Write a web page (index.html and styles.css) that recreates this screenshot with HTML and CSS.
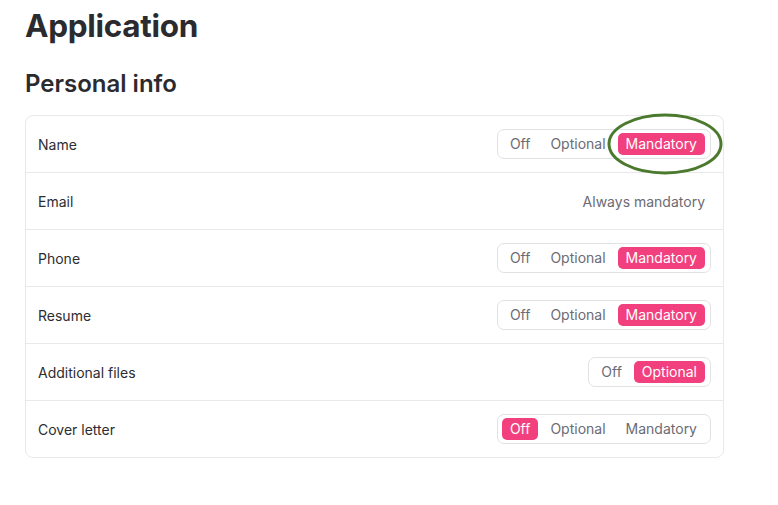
FILE: index.html
```html
<!DOCTYPE html>
<html lang="en">
<head>
  <meta charset="UTF-8" />
  <title>Application</title>
  <link rel="stylesheet" href="styles.css">
</head>
<body>
  <div class="page">
    <h1>Application</h1>
    <h2>Personal info</h2>
    <div class="card">
      <div class="row">
        <span class="label">Name</span>
        <div class="segmented">
          <span class="seg">Off</span>
          <span class="seg">Optional</span>
          <span class="seg active">Mandatory</span>
          <svg class="circle" width="124" height="68" viewBox="0 0 124 68">
            <ellipse cx="62" cy="34" rx="56" ry="29" fill="none" stroke="#4b7a2e" stroke-width="3"/>
          </svg>
        </div>
      </div>
      <div class="row">
        <span class="label">Email</span>
        <span class="note">Always mandatory</span>
      </div>
      <div class="row">
        <span class="label">Phone</span>
        <div class="segmented">
          <span class="seg">Off</span>
          <span class="seg">Optional</span>
          <span class="seg active">Mandatory</span>
        </div>
      </div>
      <div class="row">
        <span class="label">Resume</span>
        <div class="segmented">
          <span class="seg">Off</span>
          <span class="seg">Optional</span>
          <span class="seg active">Mandatory</span>
        </div>
      </div>
      <div class="row">
        <span class="label">Additional files</span>
        <div class="segmented">
          <span class="seg">Off</span>
          <span class="seg active">Optional</span>
        </div>
      </div>
      <div class="row">
        <span class="label">Cover letter</span>
        <div class="segmented">
          <span class="seg active">Off</span>
          <span class="seg">Optional</span>
          <span class="seg">Mandatory</span>
        </div>
      </div>
    </div>
  </div>
</body>
</html>
```

FILE: styles.css
```css
body {
  margin: 0;
  font-family: Inter, "Noto Sans", sans-serif;
  background: #fff;
  color: #2b2b2f;
}
.page {
  width: 699px;
  padding: 4px 0 0 25px;
}
h1 {
  font-size: 31.5px;
  font-weight: 700;
  margin: 0;
  line-height: 44px;
  letter-spacing: -0.3px;
}
h2 {
  font-size: 24px;
  font-weight: 600;
  margin: 20px 0 0;
  line-height: 32px;
}
.card {
  margin-top: 15px;
  border: 1px solid #e9e9ec;
  border-radius: 8px;
}
.row {
  height: 56px;
  display: flex;
  align-items: center;
  justify-content: space-between;
  padding: 0 12px;
  border-bottom: 1px solid #e9e9ec;
}
.row:last-child {
  border-bottom: none;
}
.label {
  font-size: 14px;
  color: #2d2d31;
}
.note {
  font-size: 14px;
  color: #6b6b73;
  margin-right: 6px;
}
.segmented {
  position: relative;
  display: flex;
  gap: 4px;
  padding: 3px 5px 3px 4px;
  border: 1px solid #e2e2e6;
  border-radius: 7px;
}
.seg {
  font-size: 14px;
  line-height: 22px;
  padding: 0 8px;
  color: #6b6b73;
  border-radius: 5px;
}
.seg.active {
  background: #f23f7d;
  color: #fff;
}
.circle {
  position: absolute;
  right: -17px;
  top: -20px;
}
```
